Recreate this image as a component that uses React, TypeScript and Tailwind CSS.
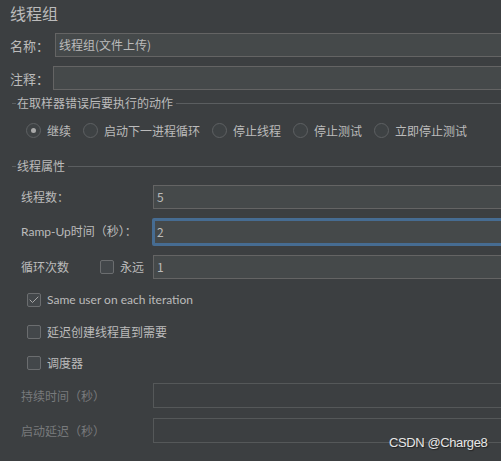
import { Check } from 'lucide-react';

const latin = { fontFamily: 'Lato, "Noto Sans CJK SC", sans-serif' };

const Legend = ({ title }: { title: string }) => (
  <div className="flex items-center h-[16px]">
    <div className="w-[4px] h-px bg-[#5b5e60] ml-[12px]" />
    <span className="px-[1px] whitespace-nowrap">{title}</span>
    <div className="flex-1 h-px bg-[#5b5e60] ml-[2px]" />
  </div>
);

const Radio = ({ label, checked }: { label: string; checked?: boolean }) => (
  <div className="flex items-center gap-[6px] mr-[12px] shrink-0 whitespace-nowrap">
    <span className="w-[15px] h-[15px] rounded-full border border-[#5e6163] bg-[#3e4244] flex items-center justify-center">
      {checked && <span className="w-[5px] h-[5px] rounded-full bg-[#a9a9a9]" />}
    </span>
    <span>{label}</span>
  </div>
);

const Box = ({ checked }: { checked?: boolean }) => (
  <span className="w-[14px] h-[14px] border border-[#6b6d6f] bg-[#43474a] rounded-[2px] flex items-center justify-center shrink-0">
    {checked && <Check size={12} strokeWidth={2} className="text-[#a8a8a8]" />}
  </span>
);

const Field = ({ value, focused, disabled }: { value?: string; focused?: boolean; disabled?: boolean }) => (
  <div
    className={
      focused
        ? 'w-[460px] shrink-0 h-[28px] border-[3px] border-[#466c92] rounded-[2px] bg-[#45494a] flex items-center pl-[2px]'
        : disabled
        ? 'w-[460px] shrink-0 h-[25px] border border-[#555859] bg-[#3c3f41]'
        : 'w-[460px] shrink-0 h-[24px] border border-[#646464] bg-[#45494a] flex items-center pl-[3px]'
    }
  >
    {value}
  </div>
);

const label = 'shrink-0 whitespace-nowrap';

export default function App() {
  return (
    <div
      className="relative w-[501px] h-[461px] overflow-hidden bg-[#3c3f41] text-[#bbbbbb] text-[12px] leading-none"
      style={{ fontFamily: '"Noto Sans CJK SC", "Noto Sans", sans-serif' }}
    >
      <div className="pl-[10px] pt-[5px] text-[16px] h-[20px]">线程组</div>

      <div className="flex items-center mt-[13px] h-[24px]">
        <span className={`${label} w-[55px] pl-[10px] text-[13px]`}>名称：</span>
        <Field value="线程组(文件上传)" />
      </div>
      <div className="flex items-center mt-[9px] h-[24px]">
        <span className={`${label} w-[53px] pl-[10px] text-[13px]`}>注释：</span>
        <Field />
      </div>

      <div className="mt-[5px]">
        <Legend title="在取样器错误后要执行的动作" />
      </div>
      <div className="flex items-center pl-[26px] mt-[11px] h-[17px]">
        <Radio label="继续" checked />
        <Radio label="启动下一进程循环" />
        <Radio label="停止线程" />
        <Radio label="停止测试" />
        <Radio label="立即停止测试" />
      </div>

      <div className="mt-[19px]">
        <Legend title="线程属性" />
      </div>

      <div className="flex items-center mt-[11px] h-[24px]">
        <span className={`${label} w-[153px] pl-[21px]`}>线程数：</span>
        <Field value="5" />
      </div>
      <div className="flex items-center mt-[9px] h-[28px]">
        <span className={`${label} w-[152px] pl-[21px]`} style={latin}>
          Ramp-Up时间（秒）：
        </span>
        <Field value="2" focused />
      </div>
      <div className="flex items-center mt-[9px] h-[24px]">
        <span className={`${label} w-[100px] pl-[21px]`}>循环次数</span>
        <Box />
        <span className={`${label} ml-[6px] w-[33px]`}>永远</span>
        <Field value="1" />
      </div>

      <div className="flex flex-col gap-[17px] pl-[27px] mt-[14px]">
        <div className="flex items-center gap-[6px] h-[14px]">
          <Box checked />
          <span style={latin} className="whitespace-nowrap">Same user on each iteration</span>
        </div>
        <div className="flex items-center gap-[6px] h-[14px] mt-[1px]">
          <Box />
          <span className="whitespace-nowrap">延迟创建线程直到需要</span>
        </div>
        <div className="flex items-center gap-[6px] h-[14px]">
          <Box />
          <span>调度器</span>
        </div>
      </div>

      <div className="flex items-center mt-[13px] h-[25px] text-[#787a7c]">
        <span className={`${label} w-[153px] pl-[21px]`}>持续时间（秒）</span>
        <Field disabled />
      </div>
      <div className="flex items-center mt-[10px] h-[25px] text-[#787a7c]">
        <span className={`${label} w-[153px] pl-[21px]`}>启动延迟（秒）</span>
        <Field disabled />
      </div>

      <div
        className="absolute left-[389px] top-[436px] text-[13px] tracking-[-0.4px] text-[#e6e6e6] [text-shadow:1px_1px_1px_#222]"
        style={{ fontFamily: '"Liberation Sans", Arial, sans-serif' }}
      >
        CSDN @Charge8
      </div>
    </div>
  );
}
